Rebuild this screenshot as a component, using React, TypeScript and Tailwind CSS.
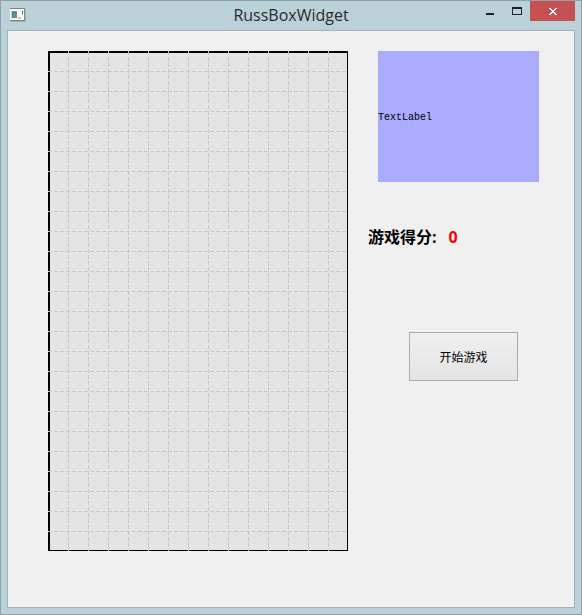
import { useState } from "react";

const COLUMNS = 15;
const ROWS = 25;
const CELL = 20;

function AppIcon() {
  return (
    <svg width="16" height="14" viewBox="0 0 16 14" shapeRendering="crispEdges" aria-hidden="true">
      <defs>
        <linearGradient id="pane" x1="0" y1="0" x2="0" y2="1">
          <stop offset="0" stopColor="#4a7fa8" />
          <stop offset="1" stopColor="#4ea873" />
        </linearGradient>
      </defs>
      <rect x="1" y="1" width="15" height="13" fill="#a3b3b9" />
      <rect width="15" height="13" fill="#fafafa" />
      <rect width="15" height="1" fill="#7f7f7f" />
      <rect y="12" width="15" height="1" fill="#7f7f7f" />
      <rect x="14" width="1" height="13" fill="#8a8a8a" />
      <rect x="1" y="3" width="1" height="8" fill="#c8c8c8" />
      <rect x="2" y="3" width="5" height="7" fill="url(#pane)" />
      <rect x="2" y="3" width="5" height="1" fill="#7895a8" />
      <rect x="8" y="9" width="3" height="2" fill="#c8c8c8" />
      <rect x="12" y="3" width="1" height="2" fill="#2f56b0" />
      <rect x="12" y="5" width="1" height="2" fill="#3aa65a" />
    </svg>
  );
}

function TitleBar() {
  return (
    <header className="grid h-[29px] grid-cols-[1fr_auto_1fr] items-start">
      <div className="pt-[7px] pl-[3px]">
        <AppIcon />
      </div>
      <h1 className="pt-[2px] font-['Open_Sans','Noto_Sans',sans-serif] text-base leading-6 text-[#2b2b2b]">
        RussBoxWidget
      </h1>
      <div className="flex justify-end">
        <button type="button" aria-label="Minimize" className="flex h-5 w-[27px] items-center justify-center">
          <svg width="8" height="8" viewBox="0 0 8 8" shapeRendering="crispEdges">
            <rect y="6" width="8" height="2" fill="#222" />
          </svg>
        </button>
        <button type="button" aria-label="Maximize" className="flex h-5 w-[27px] items-center justify-center">
          <svg width="10" height="8" viewBox="0 0 10 8" shapeRendering="crispEdges">
            <path d="M0 0H10V8H0ZM1 2V7H9V2Z" fill="#222" fillRule="evenodd" />
          </svg>
        </button>
        <button type="button" aria-label="Close" className="flex h-5 w-[45px] items-center justify-center bg-[#c75050]">
          <svg width="8" height="7" viewBox="0 0 8 7" shapeRendering="crispEdges">
            <path
              d="M0 0H2V1H3V2H5V1H6V0H8V1H7V2H6V3H5V4H6V5H7V6H8V7H6V6H5V5H3V6H2V7H0V6H1V5H2V4H3V3H2V2H1V1H0Z"
              fill="#fff"
            />
          </svg>
        </button>
      </div>
    </header>
  );
}

function Board() {
  const width = COLUMNS * CELL;
  const height = ROWS * CELL;
  const columns = Array.from({ length: COLUMNS - 1 }, (_, i) => (i + 1) * CELL);
  const rows = Array.from({ length: ROWS - 1 }, (_, i) => (i + 1) * CELL);
  return (
    <svg
      className="shrink-0"
      width={width}
      height={height}
      viewBox={`0 0 ${width} ${height}`}
      shapeRendering="crispEdges"
      role="img"
      aria-label="RussBoxWidget"
    >
      <rect width={width} height={height} fill="#000" />
      <rect x="2" y="2" width={width - 3} height={height - 3} fill="#e4e4e4" />
      <g stroke="#c8c8c8" strokeDasharray="4 2">
        {rows.map((y) => (
          <path key={y} d={`M0 ${y + 0.5}H${width}`} />
        ))}
        {columns.map((x) => (
          <path key={x} d={`M${x + 0.5} 0V${height}`} />
        ))}
      </g>
    </svg>
  );
}

export default function App() {
  const [score, setScore] = useState(0);

  return (
    <div className="flex min-h-screen flex-col border border-[#8fa2a9] bg-[#bad1d7] px-[6px] pb-[6px]">
      <TitleBar />
      <main className="flex flex-1 items-start gap-5 border border-[#9fb3b9] bg-[#f0f0f0] pt-5 pl-10">
        <Board />
        <section className="flex flex-col items-start">
          <div className="ml-[10px] flex h-[131px] w-[161px] items-center bg-[#aaaaff] pt-[2px] font-['Liberation_Mono',monospace] text-[10px] leading-3 text-black">
            TextLabel
          </div>
          <p className="mt-[43px] flex gap-3 font-['Open_Sans','Noto_Sans_CJK_SC',sans-serif] text-base leading-6 font-bold text-black">
            <span id="score-label">游戏得分:</span>
            <output aria-labelledby="score-label" className="text-[#ff0000]">
              {score}
            </output>
          </p>
          <button
            type="button"
            onClick={() => setScore(0)}
            className="mt-[83px] ml-[41px] h-[49px] w-[109px] border border-[#acacac] bg-linear-to-b from-[#f0f0f0] to-[#e4e4e4] font-['Noto_Sans_CJK_SC',sans-serif] text-xs text-black"
          >
            开始游戏
          </button>
        </section>
      </main>
    </div>
  );
}
